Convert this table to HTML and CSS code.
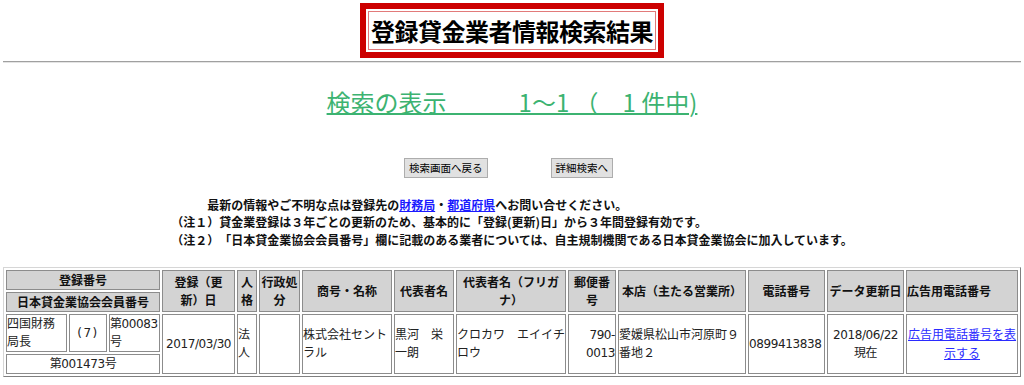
FILE: index.html
```html
<!DOCTYPE html>
<html lang="ja">
<head>
<meta charset="utf-8">
<title>登録貸金業者情報検索結果</title>
<link rel="stylesheet" href="styles.css">
</head>
<body>
<div class="title-box"><h1 class="title">登録貸金業者情報検索結果</h1></div>
<hr class="rule">
<p class="count"><span class="count-text">検索の表示　　　1～1 （　1 件中)</span></p>
<div class="actions">
  <button class="btn" type="button">検索画面へ戻る</button>
  <button class="btn" type="button">詳細検索へ</button>
</div>
<div class="notes">
  <p>　　　最新の情報やご不明な点は登録先の<a href="#">財務局</a>・<a href="#">都道府県</a>へお問い合せください。</p>
  <p>（注１）貸金業登録は３年ごとの更新のため、基本的に「登録(更新)日」から３年間登録有効です。</p>
  <p>（注２）「日本貸金業協会会員番号」欄に記載のある業者については、自主規制機関である日本貸金業協会に加入しています。</p>
</div>
<table class="results">
  <colgroup>
    <col class="c-a"><col class="c-b"><col class="c-c"><col class="c-date"><col class="c-kind">
    <col class="c-admin"><col class="c-name"><col class="c-rep"><col class="c-kana"><col class="c-zip">
    <col class="c-addr"><col class="c-tel"><col class="c-upd"><col class="c-ad">
  </colgroup>
  <tr>
    <th colspan="3">登録番号</th>
    <th rowspan="2">登録（更新）日</th>
    <th rowspan="2">人格</th>
    <th rowspan="2">行政処分</th>
    <th rowspan="2">商号・名称</th>
    <th rowspan="2">代表者名</th>
    <th rowspan="2">代表者名（フリガナ）</th>
    <th rowspan="2">郵便番号</th>
    <th rowspan="2">本店（主たる営業所）</th>
    <th rowspan="2">電話番号</th>
    <th rowspan="2">データ更新日</th>
    <th rowspan="2" class="left">広告用電話番号</th>
  </tr>
  <tr>
    <th colspan="3">日本貸金業協会会員番号</th>
  </tr>
  <tr>
    <td>四国財務局長</td>
    <td class="center paren">(7)</td>
    <td class="num">第00083号</td>
    <td rowspan="2" class="center num">2017/03/30</td>
    <td rowspan="2">法人</td>
    <td rowspan="2"></td>
    <td rowspan="2">株式会社セントラル</td>
    <td rowspan="2">黒河　栄一朗</td>
    <td rowspan="2">クロカワ　エイイチロウ</td>
    <td rowspan="2" class="right num">790-0013</td>
    <td rowspan="2">愛媛県松山市河原町９番地２</td>
    <td rowspan="2" class="num">0899413838</td>
    <td rowspan="2" class="center num">2018/06/22現在</td>
    <td rowspan="2" class="center"><a href="#">広告用電話番号を表示する</a></td>
  </tr>
  <tr>
    <td colspan="3" class="center num">第001473号</td>
  </tr>
</table>
</body>
</html>
```
FILE: styles.css
```css
body {
  margin: 3px;
  font-family: "Noto Sans CJK JP", sans-serif;
  color: #000;
  background: #fff;
  text-spacing-trim: space-all;
}

.title-box {
  width: fit-content;
  margin: 0 auto;
  border: 6px solid #cc0000;
  padding: 2px;
}

.title {
  margin: 0;
  padding: 0 2px;
  border: 1px solid #e27a7a;
  font-size: 24px;
  line-height: 37px;
  font-weight: bold;
  letter-spacing: -0.5px;
  color: #000;
}

.rule {
  margin: 3px 0 0;
  height: 0;
  border: 0;
  border-top: 1px solid #a0a0a0;
  border-bottom: 1px solid #e4e4e4;
}

.count {
  margin: 23px 0 0;
  text-align: center;
  font-size: 24px;
  line-height: 32px;
  color: #3cb371;
}

.count-text {
  text-decoration: underline;
  text-decoration-thickness: 2px;
}

.actions {
  display: flex;
  justify-content: center;
  gap: 63px;
  margin-top: 40px;
  padding-right: 7px;
}

.btn {
  height: 20px;
  padding: 0 4px;
  border: 1px solid #adadad;
  background: #e1e1e1;
  color: #000;
  font-family: "Noto Sans CJK JP", sans-serif;
  font-size: 10.5px;
  line-height: 18px;
}

.notes {
  width: fit-content;
  margin: 17.5px auto 0;
  font-size: 12px;
  line-height: 17.5px;
  font-weight: bold;
  color: #111;
}

.notes p {
  margin: 0;
}

.notes a {
  color: #1a1aff;
}

.results {
  width: 1018px;
  margin-top: 19px;
  table-layout: fixed;
  border-collapse: separate;
  border-spacing: 2px;
  border: 1px solid;
  border-color: #d6d6d6 #808080 #808080 #d6d6d6;
  font-family: "DejaVu Sans", "Noto Sans CJK JP", sans-serif;
  font-size: 12px;
  line-height: 18px;
}

.results th,
.results td {
  border: 1px solid #8c8c8c;
  padding: 0;
  vertical-align: middle;
}

.results th {
  background: #d3d3d3;
  font-family: "Noto Sans CJK JP", sans-serif;
  font-weight: bold;
  color: #111;
  text-align: center;
}

.results td {
  color: #222;
  text-align: left;
}

.results a {
  color: #2b2bff;
  font-family: "Noto Sans CJK JP", sans-serif;
}

.results .left { text-align: left; }
.results .center { text-align: center; }
.results .right { text-align: right; }
.results .num { letter-spacing: -0.4px; }
.results .paren { letter-spacing: 1.5px; }

.c-a { width: 61px; }
.c-b { width: 38px; }
.c-c { width: 51px; }
.c-date { width: 73px; }
.c-kind { width: 20px; }
.c-admin { width: 41px; }
.c-name { width: 90px; }
.c-rep { width: 60px; }
.c-kana { width: 110px; }
.c-zip { width: 48px; }
.c-addr { width: 128px; }
.c-tel { width: 77px; }
.c-upd { width: 77px; }
.c-ad { width: 112px; }
```
